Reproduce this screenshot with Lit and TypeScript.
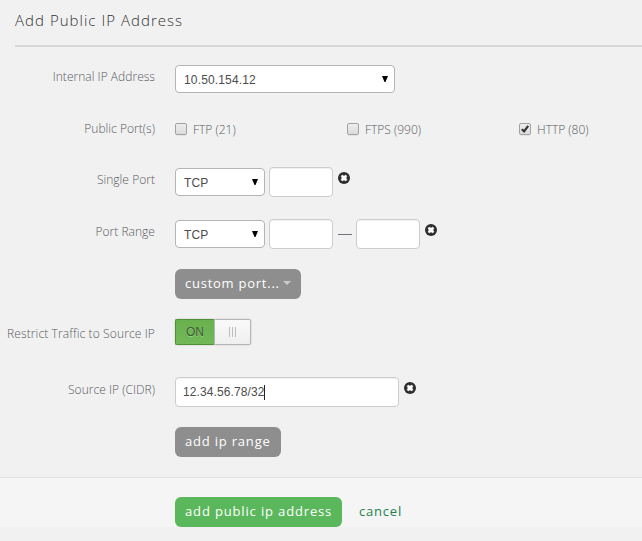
import { LitElement, html, css } from "lit";
import { customElement, property } from "lit/decorators.js";

@customElement("remove-icon")
class RemoveIcon extends LitElement {
  static styles = css`
    :host { display: block; width: 12px; height: 12px; }
    svg { display: block; }
  `;
  render() {
    return html`<svg width="12" height="12" viewBox="0 0 12 12">
      <circle cx="6" cy="6" r="6" fill="#2d2d2d" />
      <path d="M3 4.2 4.2 3 6 4 7.8 3 9 4.2 8 6 9 7.8 7.8 9 6 8 4.2 9 3 7.8 4 6Z" fill="#fff" stroke="#fff" stroke-width=".4" />
    </svg>`;
  }
}

@customElement("select-box")
class SelectBox extends LitElement {
  @property() value = "";
  static styles = css`
    :host {
      box-sizing: border-box; display: flex; align-items: center; justify-content: space-between;
      height: 28px; padding: 1px 6px 0 8px; background: #fff; border: 1px solid #b5b5b5;
      border-radius: 4px; color: #4c4c4c; font: 12px/20px "Liberation Sans", Arial, sans-serif; letter-spacing: .15px;
    }
    svg { display: block; margin-top: -2px; }
  `;
  render() {
    return html`<span>${this.value}</span>
      <svg width="6" height="6" viewBox="0 0 6 6"><path d="M0 0H6L3.5 6H2.5Z" fill="#000" /></svg>`;
  }
}

@customElement("check-box")
class CheckBox extends LitElement {
  @property() label = "";
  @property({ type: Boolean }) checked = false;
  static styles = css`
    :host { display: flex; align-items: center; gap: 6px; width: 172px; height: 18px; }
    .box {
      box-sizing: border-box; width: 12px; height: 12px; margin-top: -2px; border: 1px solid #a2a2a2; border-radius: 2px;
      background: linear-gradient(#ededed, #dcdcdc); box-shadow: 0 1px 0 rgba(0, 0, 0, .05);
    }
    svg { display: block; }
  `;
  render() {
    return html`<span class="box">${this.checked
        ? html`<svg width="10" height="10" viewBox="0 0 10 10"><path d="M1.8 5.2 4.1 7.4 8.2 1.8" fill="none" stroke="#333" stroke-width="2.2" /></svg>`
        : ""}</span><span>${this.label}</span>`;
  }
}

@customElement("app-root")
class AppRoot extends LitElement {
  static styles = css`
    :host {
      display: block; width: 642px; height: 541px; overflow: hidden; background: #f1f1f1; color: #585b63;
      font: 300 12px/18px "Open Sans", sans-serif;
    }
    header {
      box-sizing: border-box; height: 47px; margin-left: 15px; padding-top: 10px; border-bottom: 2px solid #d7d7d7;
      font-size: 15px; line-height: 20px; letter-spacing: 1.03px; color: #333;
    }
    .form { box-sizing: border-box; height: 430px; padding-top: 18px; }
    .row { display: grid; grid-template-columns: 155px 1fr; column-gap: 20px; height: 52px; }
    .row.h50 { height: 50px; }
    .row.h58 { height: 58px; }
    .label { text-align: right; padding-top: 4px; white-space: nowrap; letter-spacing: .03px; }
    .label.high { padding-top: 3px; }
    .label.low { padding-top: 6px; letter-spacing: .12px; }
    .controls { display: flex; align-items: flex-start; }
    .select { margin-top: 1px; width: 90px; margin-right: 4px; }
    .wide { margin-top: 0; width: 220px; }
    .input {
      box-sizing: border-box; width: 64px; height: 30px; background: #fff; border: 1px solid #ccc; border-radius: 4px;
      box-shadow: inset 0 1px 1px rgba(0, 0, 0, .06);
    }
    .cidr {
      display: flex; align-items: center; width: 224px; padding-left: 7px; color: #4c4c4c;
      font: 12px/18px "Liberation Sans", Arial, sans-serif; letter-spacing: .1px;
    }
    .caret { width: 1px; height: 15px; background: #222; }
    .remove { margin: 5px 0 0 5px; }
    .dash { width: 14px; height: 1px; margin: 15px 4px 0 5px; background: #6f737b; }
    .checks { padding-top: 4px; }
    .btn {
      box-sizing: border-box; display: flex; align-items: center; height: 30px; padding: 0 10px 2px; border-radius: 6px;
      background: #8e8e8e; color: #fff; font-size: 13px; font-weight: 400; letter-spacing: .8px; white-space: nowrap;
    }
    .custom { width: 126px; justify-content: space-between; letter-spacing: .75px; }
    .custom svg { margin-top: -1px; }
    .range { width: 106px; }
    .toggle {
      box-sizing: border-box; display: flex; width: 76px; height: 26px; border-radius: 2px;
      box-shadow: 0 0 2px rgba(0, 0, 0, .2);
    }
    .on {
      box-sizing: border-box; width: 39px; border: 1px solid #4f8f3a; border-right: 0; border-radius: 2px 0 0 2px;
      background: linear-gradient(#69b04e, #72b858); text-align: center; color: #3e5b35;
      font: 12px/25px "Liberation Sans", Arial, sans-serif; text-shadow: 0 1px 0 rgba(255, 255, 255, .3);
    }
    .thumb {
      box-sizing: border-box; flex: 1; display: flex; align-items: center; justify-content: center; gap: 2px;
      border: 1px solid #b5b5b5; border-radius: 0 2px 2px 0; background: linear-gradient(#fafafa, #efefef);
    }
    .grip { width: 1px; height: 10px; background: #bdbdbd; }
    footer {
      box-sizing: border-box; display: flex; height: 50px; padding: 19px 0 0 175px; background: #f5f5f5;
      border-top: 1px solid #e2e2e2;
    }
    .submit { width: 167px; background: #5bb75b; letter-spacing: .85px; }
    .cancel { margin-left: 17px; font-size: 13px; line-height: 29px; font-weight: 400; letter-spacing: .8px; color: #23814f; }
  `;
  render() {
    return html`
      <header>Add Public IP Address</header>
      <div class="form">
        <div class="row"><div class="label high">Internal IP Address</div>
          <div class="controls"><select-box class="select wide" value="10.50.154.12"></select-box></div></div>
        <div class="row h50"><div class="label high">Public Port(s)</div>
          <div class="controls checks">
            <check-box label="FTP (21)"></check-box><check-box label="FTPS (990)"></check-box><check-box label="HTTP (80)" checked></check-box>
          </div></div>
        <div class="row"><div class="label">Single Port</div>
          <div class="controls"><select-box class="select" value="TCP"></select-box><div class="input"></div><remove-icon class="remove"></remove-icon></div></div>
        <div class="row h50"><div class="label">Port Range</div>
          <div class="controls"><select-box class="select" value="TCP"></select-box><div class="input"></div><div class="dash"></div><div class="input"></div><remove-icon class="remove"></remove-icon></div></div>
        <div class="row h50"><div class="label"></div>
          <div class="controls"><div class="btn custom"><span>custom port...</span><svg width="8" height="4" viewBox="0 0 8 4"><path d="M0 0H8L4 4Z" fill="#ccc" /></svg></div></div></div>
        <div class="row h58"><div class="label low">Restrict Traffic to Source IP</div>
          <div class="controls"><div class="toggle"><div class="on">ON</div>
            <div class="thumb"><i class="grip"></i><i class="grip"></i><i class="grip"></i></div></div></div></div>
        <div class="row h50"><div class="label">Source IP (CIDR)</div>
          <div class="controls"><div class="input cidr">12.34.56.78/32<i class="caret"></i></div><remove-icon class="remove"></remove-icon></div></div>
        <div class="row h50"><div class="label"></div><div class="controls"><div class="btn range">add ip range</div></div></div>
      </div>
      <footer><div class="btn submit">add public ip address</div><div class="cancel">cancel</div></footer>
    `;
  }
}
